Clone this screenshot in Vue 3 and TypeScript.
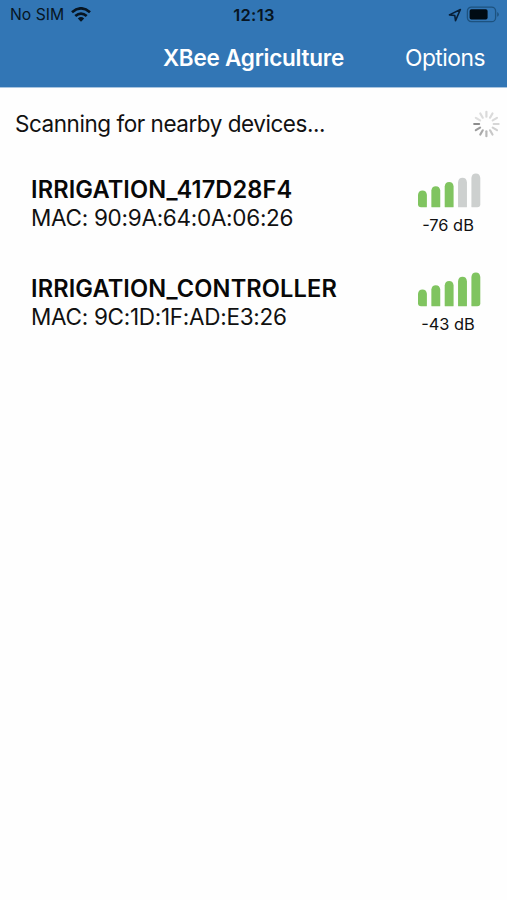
<script setup lang="ts">
interface Device {
  name: string
  mac: string
  rssi: number
  level: number
}

const devices: Device[] = [
  { name: 'IRRIGATION_417D28F4', mac: '90:9A:64:0A:06:26', rssi: -76, level: 3 },
  { name: 'IRRIGATION_CONTROLLER', mac: '9C:1D:1F:AD:E3:26', rssi: -43, level: 5 },
]

// Round-topped bars; only the outer bottom corners of the group are rounded.
function barPath(i: number): string {
  const x = 1 + i * 13.35
  const r = x + 8.9
  const top = 17.4 - i * 4.2
  const bottom = 34.3
  const bl = i === 0 ? 3 : 0.6
  const br = i === 4 ? 3 : 0.6
  return `M${x} ${bottom - bl}V${top + 4.4}Q${x + 0.5} ${top} ${x + 4.45} ${top}Q${r - 0.5} ${top} ${r} ${top + 4.4}V${bottom - br}Q${r} ${bottom} ${r - br} ${bottom}H${x + bl}Q${x} ${bottom} ${x} ${bottom - bl}Z`
}

const bars = [0, 1, 2, 3, 4].map(barPath)

const spokes = ['#dadada', '#dadada', '#dadada', '#d6d6d6', '#d0d0d0', '#c8c8c8', '#b8b8b8', '#aaaaaa', '#9c9c9c', '#8c8c8c', '#dedede', '#dcdcdc']
</script>

<template>
  <main class="screen">
    <header class="header">
      <div class="status">
        <div class="carrier">
          <span>No SIM</span>
          <svg width="20" height="15" viewBox="0 0 20 15">
            <g fill="none" stroke="#071522" stroke-width="2.8">
              <path d="M1 5.2Q10-2.4 19 5.2" />
              <path d="M4.3 9Q10 4.2 15.7 9" />
            </g>
            <path d="M6.8 11.4Q10 8.6 13.2 11.4L10 14.8Z" fill="#071522" />
          </svg>
        </div>
        <time class="clock">12:13</time>
        <div class="power">
          <svg width="14" height="14" viewBox="0 0 14 14">
            <path d="M1.4 6.9L12.4 1.5L7.5 12.6L6.8 7.5Z" fill="none" stroke="#071f38" stroke-width="1.6" stroke-linejoin="round" />
          </svg>
          <svg width="34" height="18" viewBox="0 0 34 18">
            <rect x="1.4" y="1.1" width="28.2" height="14.6" rx="4" fill="none" stroke="#1d527f" stroke-width="1.3" />
            <rect x="3.6" y="3.3" width="18" height="10.2" rx="1.8" fill="#000b14" />
            <path d="M31.2 6Q32.8 6.7 32.8 8.4Q32.8 10.1 31.2 10.8Z" fill="#1d527f" />
          </svg>
        </div>
      </div>
      <div class="nav">
        <h1>XBee Agriculture</h1>
        <a class="options">Options</a>
      </div>
    </header>

    <section class="scan">
      <span class="scan-text">Scanning for nearby devices...</span>
      <svg width="28" height="28" viewBox="-14.4 -14 28 28">
        <line v-for="(c, i) in spokes" :key="i" x1="0" y1="-7.3" x2="0" y2="-12.2" :stroke="c" stroke-width="2.2" stroke-linecap="round" :transform="`rotate(${i * 30})`" />
      </svg>
    </section>

    <ul class="devices">
      <li v-for="d in devices" :key="d.mac" class="device">
        <div>
          <div class="name">{{ d.name }}</div>
          <div class="mac">MAC: {{ d.mac }}</div>
        </div>
        <div class="signal">
          <svg width="65" height="36" viewBox="0 0 65 36">
            <path v-for="(b, i) in bars" :key="i" :d="b" :fill="i < d.level ? '#80c460' : '#cdd0cf'" />
          </svg>
          <span class="rssi">{{ d.rssi }} dB</span>
        </div>
      </li>
    </ul>
  </main>
</template>

<style>
body {
  margin: 0;
  background: #fefefe;
}
</style>

<style scoped>
.screen {
  height: 900px;
  overflow: hidden;
  font-family: Inter, "Liberation Sans", sans-serif;
  color: #111;
  background: #fefefe;
}
.header {
  height: 88px;
  box-sizing: border-box;
  background: #3276b5;
  border-bottom: 1px solid #a9c5e0;
}
.status {
  height: 29px;
  display: grid;
  grid-template-columns: 1fr auto 1fr;
  align-items: center;
  padding: 0 7px 0 10px;
  color: #071522;
}
.carrier {
  display: flex;
  align-items: center;
  gap: 7px;
  font-size: 15.7px;
}
.clock {
  font-size: 16.5px;
  font-weight: 600;
  letter-spacing: 0.3px;
  margin-right: 2px;
}
.power {
  display: flex;
  align-items: center;
  justify-content: flex-end;
  gap: 4px;
}
.nav {
  height: 57px;
  display: grid;
  grid-template-columns: 1fr auto 1fr;
  align-items: center;
  padding: 0 22px;
  color: #fff;
}
h1 {
  grid-column: 2;
  margin: 0;
  font-size: 22.5px;
  font-weight: 600;
  letter-spacing: -0.24px;
}
.options {
  justify-self: end;
  font-size: 22.8px;
  letter-spacing: -0.5px;
}
.scan {
  height: 73px;
  box-sizing: border-box;
  display: flex;
  align-items: center;
  justify-content: space-between;
  padding: 0 7px 2px 15px;
  font-size: 22.5px;
}
.scan-text {
  letter-spacing: -0.46px;
}
.devices {
  list-style: none;
  margin: 0;
  padding: 0;
}
.device {
  height: 99px;
  box-sizing: border-box;
  display: flex;
  justify-content: space-between;
  padding: 12px 25px 0 31px;
}
.name,
.mac {
  line-height: 28px;
}
.name {
  padding-top: 3px;
  color: #080808;
  font-size: 23.6px;
  font-weight: 600;
  letter-spacing: 0.12px;
}
.mac {
  font-size: 22.5px;
  letter-spacing: -0.28px;
}
.signal {
  display: flex;
  flex-direction: column;
  align-items: center;
  width: 65px;
}
.rssi {
  margin-top: 6px;
  padding-right: 3px;
  font-size: 16.4px;
  line-height: 20px;
}
</style>
